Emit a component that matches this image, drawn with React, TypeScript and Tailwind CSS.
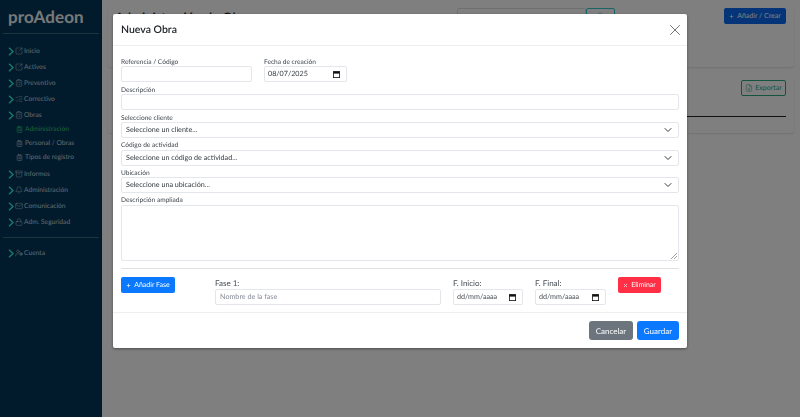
import React from "react";
import { ChevronDown, SquareArrowOutUpRight, ClipboardList, ListChecks, Archive, Bell, Mail, Lock, UserCog, FileDown, X, Plus, Search } from "lucide-react";

const F = { fontFamily: 'Lato,"Noto Sans",sans-serif' };

function Chevron() {
  return (
    <svg className="w-[6px] h-[9px] mr-[1px] shrink-0 text-[#3af0d4]" viewBox="0 0 6 9" fill="none" stroke="currentColor" strokeWidth="1.4">
      <path d="M1 0.7 L5 4.5 L1 8.3" />
    </svg>
  );
}

function NavItem({ icon: Icon, label, className = "" }: { icon: any; label: string; className?: string }) {
  return (
    <div className={`flex items-center h-[16px] pl-[8px] ${className}`}>
      <Chevron />
      <Icon className="w-[8px] h-[8px] text-[#c5d3da] mr-[1px] shrink-0" strokeWidth={1.4} />
      <span className="text-[6.7px] leading-none text-[#c5d3da] whitespace-nowrap">{label}</span>
    </div>
  );
}

function SubItem({ label, active }: { label: string; active?: boolean }) {
  return (
    <div className="flex items-center h-[14px] pl-[16px]">
      <ClipboardList className={`w-[7px] h-[7px] mr-[2px] ${active ? "text-[#35e07c]" : "text-[#c5d3da]"}`} strokeWidth={2} />
      <span className={`text-[6.7px] leading-none whitespace-nowrap ${active ? "text-[#35c46c]" : "text-[#c5d3da]"}`}>{label}</span>
    </div>
  );
}

function Label({ children }: { children: React.ReactNode }) {
  return <div className="text-[6.6px] leading-[12px] h-[10px] text-[#3f464d]">{children}</div>;
}

const box = "bg-white border border-[#e3e6ea] rounded-[2px]";

function CalIcon() {
  return (
    <svg className="w-[7px] h-[7px] shrink-0" viewBox="0 0 7 7" fill="none">
      <rect x="0.4" y="0.6" width="6.2" height="6" stroke="#111" strokeWidth="0.8" fill="none" />
      <rect x="0.4" y="0.6" width="6.2" height="2" fill="#111" />
    </svg>
  );
}

function Select({ text, className = "" }: { text: string; className?: string }) {
  return (
    <div className={`${box} h-[16px] flex items-center justify-between pl-[4px] pr-[4px] ${className}`}>
      <span className="text-[7.2px] leading-none text-[#343a40]">{text}</span>
      <ChevronDown className="w-[12px] h-[12px] text-[#343a40]" strokeWidth={2} />
    </div>
  );
}

function DateBox({ text, muted }: { text: string; muted?: boolean }) {
  return (
    <div className={`${box} h-[16px] flex items-center justify-between pl-[3px] pr-[6px]`}>
      <span className={`text-[7.2px] leading-none whitespace-nowrap ${muted ? "text-[#4a5056]" : "text-[#343a40]"}`}>{text}</span>
      <CalIcon />
    </div>
  );
}

export default function App() {
  return (
    <div className="relative h-[417px] w-[800px] overflow-hidden flex bg-white [text-rendering:geometricPrecision]" style={F}>
      <aside className="w-[102px] shrink-0 bg-[#03365a] flex flex-col">
        <div className="h-[34px] border-b border-[#2f6f78] mx-[3px] pl-[5px] flex items-center">
          <span className="text-[17px] leading-none font-bold text-[#eef3f3] tracking-[0.1px]">proAdeon</span>
        </div>
        <div className="pt-[9px]">
          <NavItem icon={SquareArrowOutUpRight} label="Inicio" />
          <NavItem icon={SquareArrowOutUpRight} label="Activos" />
          <NavItem icon={ClipboardList} label="Preventivo" />
          <NavItem icon={ListChecks} label="Correctivo" />
          <NavItem icon={ClipboardList} label="Obras" />
          <div className="-mt-[1px]">
            <SubItem label="Administración" active />
            <SubItem label="Personal / Obras" />
            <SubItem label="Tipos de registro" />
          </div>
          <NavItem icon={Archive} label="Informes" className="mt-[2px]" />
          <NavItem icon={Bell} label="Administración" />
          <NavItem icon={Mail} label="Comunicación" />
          <NavItem icon={Lock} label="Adm. Seguridad" />
        </div>
        <div className="mx-[3px] mt-[7px] border-t border-[#2f6f78] pt-[7px]">
          <div className="-mx-[3px]"><NavItem icon={UserCog} label="Cuenta" /></div>
        </div>
      </aside>

      <main className="flex-1 bg-[#ffffff] p-[6px] flex flex-col gap-[8px]">
        <section className="relative h-[61px] bg-white rounded-[2px] shadow-[0_1px_2px_rgba(0,0,0,0.12)] flex items-start pl-[7px] pr-[8px] pt-[2px]">
          <h1 className="text-[13px] leading-[16px] font-semibold text-[#222] mt-[1px] whitespace-nowrap">Administración de Obras</h1>
          <div className="ml-auto flex items-center mr-[171px]">
            <div className="w-[129px] h-[15px] border border-[#dde1e5] rounded-[2px]" />
            <div className="w-[29px] h-[15px] border border-[#30c8d0] rounded-[2px] flex items-center justify-center">
              <Search className="w-[7px] h-[7px] text-[#30c8d0]" />
            </div>
          </div>
          <div className="h-[16px] w-[62px] bg-[#0a6bf0] rounded-[2px] flex items-center justify-center gap-[3px] text-white text-[7px] absolute right-[8px] top-[2px]">
            <Plus className="w-[5px] h-[5px]" strokeWidth={3} />
            <span className="whitespace-nowrap">Añadir / Crear</span>
          </div>
        </section>
        <section className="h-[58px] bg-white rounded-[2px] shadow-[0_1px_2px_rgba(0,0,0,0.12)] px-[8px] pt-[5px] flex flex-col items-end">
          <div className="h-[16px] w-[45px] border border-[#28a87a] rounded-[2px] flex items-center justify-center gap-[2px] text-[#28a87a] text-[7px]">
            <FileDown className="w-[8px] h-[8px]" strokeWidth={1.5} />
            <span>Exportar</span>
          </div>
          <div className="w-full h-[1px] bg-[#222] mt-[20px]" />
        </section>
      </main>

      <div className="fixed inset-0 bg-black/50 flex justify-center items-start pt-[14px]">
        <div className="w-[574px] h-[334px] bg-white rounded-[2px] shadow-[0_1px_3px_rgba(0,0,0,0.4)] flex flex-col">
          <header className="h-[32px] border-b border-[#eceef0] flex items-center justify-between pl-[8px] pr-[3px] shrink-0">
            <h2 className="text-[10.5px] leading-[14px] pt-[1px] font-semibold text-[#212529]">Nueva Obra</h2>
            <X className="w-[18px] h-[18px] text-[#666]" strokeWidth={1.2} />
          </header>
          <div className="flex-1 px-[8px] pt-[10px]">
            <div className="flex gap-[12px] h-[28px]">
              <div className="w-[131px]">
                <Label>Referencia / Código</Label>
                <div className={`${box} h-[16px]`} />
              </div>
              <div className="w-[83px]">
                <Label>Fecha de creación</Label>
                <DateBox text="08/07/2025" />
              </div>
            </div>
            <div>
              <Label>Descripción</Label>
              <div className={`${box} h-[16px]`} />
            </div>
            <div className="mt-[2px]">
              <Label>Seleccione cliente</Label>
              <Select text="Seleccione un cliente..." />
            </div>
            <div className="mt-[1px]">
              <Label>Código de actividad</Label>
              <Select text="Seleccione un código de actividad..." className="mt-[1px]" />
            </div>
            <div className="mt-[1px]">
              <Label>Ubicación</Label>
              <Select text="Seleccione una ubicación..." />
            </div>
            <div className="mt-[1px]">
              <Label>Descripción ampliada</Label>
              <div className={`${box} h-[56px] mt-[1px] relative`}>
                <svg className="absolute right-[1px] bottom-[1px] w-[6px] h-[6px] text-[#777]" viewBox="0 0 6 6" stroke="currentColor" strokeWidth="0.7">
                  <path d="M0 6 L6 0 M3 6 L6 3" />
                </svg>
              </div>
            </div>
            <div className="h-[1px] bg-[#dfe2e5] mt-[7px]" />
            <div className="flex mt-[8px]">
              <div className="w-[54px] h-[16px] bg-[#0a78ff] rounded-[2px] flex items-center justify-center gap-[3px] text-white text-[7px]">
                <Plus className="w-[5px] h-[5px]" strokeWidth={3} />
                <span className="whitespace-nowrap">Añadir Fase</span>
              </div>
              <div className="ml-[40px] w-[226px] pt-[1px]">
                <div className="text-[8px] leading-[11px] text-[#444b52]">Fase 1:</div>
                <div className={`${box} h-[16px] flex items-center pl-[4px] text-[7.2px] text-[#868e96]`}>Nombre de la fase</div>
              </div>
              <div className="ml-[12px] w-[70px] pt-[1px]">
                <div className="text-[8px] leading-[11px] text-[#444b52]">F. Inicio:</div>
                <DateBox text="dd/mm/aaaa" muted />
              </div>
              <div className="ml-[12px] w-[71px] pt-[1px]">
                <div className="text-[8px] leading-[11px] text-[#444b52]">F. Final:</div>
                <DateBox text="dd/mm/aaaa" muted />
              </div>
              <div className="ml-[12px] w-[43px] h-[16px] bg-[#ff2f45] rounded-[2px] flex items-center justify-center gap-[3px] text-white text-[7px]">
                <X className="w-[5px] h-[5px]" strokeWidth={3} />
                <span>Eliminar</span>
              </div>
            </div>
          </div>
          <footer className="h-[36px] border-t border-[#eceef0] flex items-start justify-end gap-[4px] pt-[8px] pr-[8px] shrink-0">
            <div className="w-[44px] h-[19px] bg-[#6c757d] rounded-[3px] flex items-center justify-center text-white text-[8px]">Cancelar</div>
            <div className="w-[42px] h-[19px] bg-[#0a78ff] rounded-[3px] flex items-center justify-center text-white text-[8px]">Guardar</div>
          </footer>
        </div>
      </div>
    </div>
  );
}
